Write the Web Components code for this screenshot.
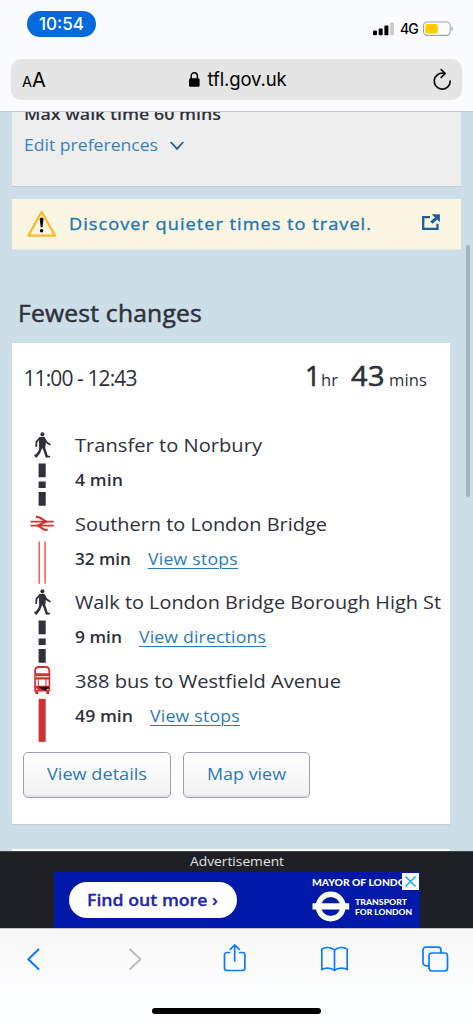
<!DOCTYPE html>
<html lang="en">
<head>
<meta charset="utf-8">
<title>Plan a journey</title>
<style>
html,body{margin:0;padding:0}
body{width:473px;height:1023px;overflow:hidden;display:flex;flex-direction:column;background:#ccdee7;font-family:"Open Sans","Noto Sans",sans-serif;color:#2e313a}
</style>
</head>
<body>
<browser-header></browser-header>
<page-view>
  <prefs-panel></prefs-panel>
  <notice-bar><fit-text w="303">Discover quieter times to travel.</fit-text></notice-bar>
  <section-title><fit-text w="184">Fewest changes</fit-text></section-title>
  <journey-card>
    <journey-leg kind="walk"><fit-text w="187">Transfer to Norbury</fit-text><fit-text slot="time" w="48">4 min</fit-text></journey-leg>
    <journey-leg kind="rail"><fit-text w="252">Southern to London Bridge</fit-text><fit-text slot="time" w="56">32 min</fit-text><fit-text slot="link" w="90">View stops</fit-text></journey-leg>
    <journey-leg kind="walk"><fit-text w="366">Walk to London Bridge Borough High St</fit-text><fit-text slot="time" w="47">9 min</fit-text><fit-text slot="link" w="127">View directions</fit-text></journey-leg>
    <journey-leg kind="bus"><fit-text w="266">388 bus to Westfield Avenue</fit-text><fit-text slot="time" w="58">49 min</fit-text><fit-text slot="link" w="90">View stops</fit-text></journey-leg>
    <plain-button slot="actions" style="width:148px"><fit-text w="100">View details</fit-text></plain-button>
    <plain-button slot="actions" style="width:127px"><fit-text w="79">Map view</fit-text></plain-button>
  </journey-card>
</page-view>
<ad-strip></ad-strip>
<browser-toolbar></browser-toolbar>

<script>
function define(name, html){
  const t=document.createElement('template');
  t.innerHTML=html;
  customElements.define(name, class extends HTMLElement{
    constructor(){super();this.attachShadow({mode:'open'}).append(t.content.cloneNode(true));}
  });
}

define('browser-header', `
<style>
:host{display:flex;flex-direction:column;height:112px;box-sizing:border-box;flex:none;background:#fafbfc;border-bottom:1px solid #c3c7ca;font-family:Inter,"Liberation Sans",sans-serif;color:#000}
.status{display:flex;justify-content:space-between;height:59px;padding:11px 19px 0 27px;box-sizing:border-box}
.time{width:69px;height:26px;border-radius:13px;background:#0469dc;color:#fff;font-size:17px;font-weight:500;line-height:26px;display:flex;justify-content:center}
.sig{display:flex;align-items:center;height:35px;gap:6px;font-size:14px;font-weight:500}
svg{display:block}
.bar{margin:0 11px;height:41px;border-radius:10px;background:#e5e5e6;display:flex;align-items:center;justify-content:space-between;padding:0 9px 0 11px}
.aa{display:flex;align-items:baseline;font-size:20px;width:60px}
.aa small{font-size:14.5px}
.url{display:flex;align-items:center;gap:8px;font-size:18.5px;line-height:43px}
.end{width:60px;display:flex;justify-content:flex-end}
</style>
<div class="status">
  <div class="time"><fit-text w="45">10:54</fit-text></div>
  <div class="sig">
    <svg width="21" height="14" viewBox="0 0 21 14"><rect x="0" y="8.6" width="4" height="4.6" rx="1"/><rect x="5.7" y="6.4" width="4" height="6.8" rx="1"/><rect x="11.4" y="3.4" width="4" height="9.8" rx="1"/><rect x="17" y="0.5" width="4" height="12.7" rx="1" fill="#ccc"/></svg>
    <fit-text w="18">4G</fit-text>
    <svg width="31" height="16" viewBox="0 0 31 16" style="margin-left:-1px"><rect x=".6" y="1" width="26.6" height="13.4" rx="3.6" fill="#fff" stroke="#a0a0a3" stroke-width="1.1"/><rect x="2.4" y="2.9" width="12.4" height="9.7" rx="1.8" fill="#fecb04"/><path d="M28.6 5.3a3 3 0 0 1 0 4.8z" fill="#999"/></svg>
  </div>
</div>
<div class="bar">
  <div class="aa"><small>A</small><span>A</span></div>
  <div class="url"><svg width="11" height="15" viewBox="0 0 11 15"><rect x="0" y="6.3" width="10.6" height="8.5" rx="1.5"/><path d="M2.2 7V4.2a3.1 3.4 0 0 1 6.2 0V7" fill="none" stroke="#000" stroke-width="1.5"/></svg><fit-text w="79">tfl.gov.uk</fit-text></div>
  <div class="end"><svg width="21" height="24" viewBox="0 0 21 24" fill="none" stroke="#111" stroke-width="1.7" stroke-linecap="round" stroke-linejoin="round"><path d="M11.7 5.3A8 8 0 1 0 18.2 13"/><path d="M9.2 1.6l4 3.9-4 3.9"/></svg></div>
</div>`);

define('page-view', `
<style>
:host{display:block;position:relative;height:739px;flex:none;overflow:hidden;background:#ccdee7}
.thumb{position:absolute;left:466px;top:133px;width:4px;height:252px;border-radius:2px;background:#a5b5bd}
.next{margin:24px 0 0 12px;width:438px;height:10px;background:#fff}
</style>
<slot></slot><div class="next"></div><div class="thumb"></div>`);

define('prefs-panel', `
<style>
:host{display:block;margin-left:12px;width:449px;height:75px;box-sizing:border-box;background:#eee;border-bottom:1px solid #c6cacd;padding-left:12px;overflow:hidden;font-size:17px}
.max{font-weight:600;line-height:20px;margin-top:-8.5px;height:20px}
.edit{display:flex;align-items:center;gap:12px;line-height:24px;margin-top:9px;color:#3a82bd}
svg{margin-top:2px}
</style>
<div class="max"><fit-text w="197">Max walk time 60 mins</fit-text></div>
<div class="edit"><fit-text w="134">Edit preferences</fit-text><svg width="14" height="10" viewBox="0 0 14 10" fill="none" stroke="#1c5f9a" stroke-width="1.8"><path d="M.8 1l6.2 6.900L13.200 1"/></svg></div>`);

define('notice-bar', `
<style>
:host{display:flex;align-items:center;margin:12px 0 0 12px;width:449px;height:50.5px;box-sizing:border-box;background:#faf5e1;border-bottom:1px solid #e3e4da;padding:0 20px 0 14px;font-size:17px;-webkit-text-stroke:.35px;color:#2275b5}
.t{margin-left:12px;flex:1}
svg{display:block}
</style>
<svg width="31" height="28" viewBox="0 0 31 28"><path d="M15.6 1.8L29 25.6H2.4z" fill="none" stroke="#fdb827" stroke-width="2.2" stroke-linejoin="round"/><path d="M13.8 9.3a1.8 1.8 0 0 1 3.7 0l-1 8h-1.8z"/><circle cx="15.6" cy="20.8" r="1.7"/></svg>
<div class="t"><slot></slot></div>
<svg width="20" height="18" viewBox="0 0 20 18" style="margin-top:-3px"><path d="M9 4.2H2.2v11.6h14.3v-5" fill="none" stroke="#1c5f9a" stroke-width="2.3"/><path d="M10.7 1.2h8.2v8l-2.7-2.6-4.7 4.2-2.2-2.2 4.6-4.2z" fill="#1c5f9a"/></svg>`);

define('section-title', `
<style>:host{display:block;margin:48px 0 0 18px;height:45.5px;line-height:30px;font-size:23px;-webkit-text-stroke:.5px}</style>
<slot></slot>`);

define('journey-card', `
<style>
:host{display:block;margin-left:12px;width:438px;height:482px;box-sizing:border-box;background:#fff;border-bottom:1px solid #c5ccd2;padding:16px 0 0 11.5px}
.head{display:flex;justify-content:space-between;align-items:baseline;height:71px;line-height:34px;padding-right:23px;font-size:21px}
.total{display:flex;align-items:baseline;font-size:15.5px}
b{font-size:27px;font-weight:400;-webkit-text-stroke:.6px}
.acts{display:flex;gap:11.500px;margin:7.500px 0 0 -.5px}
</style>
<div class="head"><fit-text w="113">11:00 - 12:43</fit-text>
<div class="total"><b style="margin-right:1px"><fit-text w="15">1</fit-text></b><fit-text w="17">hr</fit-text><b style="margin:0 4px 0 13px"><fit-text w="34">43</fit-text></b><fit-text w="38">mins</fit-text></div></div>
<slot></slot>
<div class="acts"><slot name="actions"></slot></div>`);

const WALK=`<g fill="#2e313a" stroke="#2e313a" stroke-linecap="round" stroke-linejoin="round"><circle cx="41.9" cy="433.800" r="2" stroke="none"/><path d="M39.300 437.300l4.300-.4 1.200 3.500-.7 6.400-4.600.8-.200-3.400z" stroke-width="1.500"/><g fill="none"><path d="M39 437.800l-3 3.600-.3 4.300M44.200 438.600l1.800 3.200 3.300 2.100" stroke-width="1.800"/><path d="M40.600 446.500l-2 5.400-3 3.700M42.900 446.500l1.700 4.300 1.500 4.800" stroke-width="2.500"/><path d="M46 456.100h2.900M34.500 454.700l1.500 1.500" stroke-width="1.600"/></g></g>
<path fill="#2e313a" d="M38.1 463h7.100v13.700h-7.100zM38.100 481h7.100v6.600h-7.100zM38.100 491.600h7.100v13.600h-7.100z"/>`;
const RAIL=`<g fill="none" stroke="#ce3433" stroke-width="1.900"><path d="M30 443.100h23.300M30 447.100h23.300"/><path d="M35.400 438.400l3.300.300 7 4.400-8.300 4 6.500 4 3.200.3" stroke-width="2.200"/></g>
<path fill="#f0201f" d="M38.100 463h1.100v42.300h-1.100zM44 463h1.100v42.300H44z"/>`;
const BUS=`<path d="M33.700 439.200V455h1.100v2.600h2.900V455h8v2.600h2.900V455h1.100v-20.400q0-5-4.600-5h-6.800q-4.600 0-4.600 5z" fill="#d3302f"/>
<path d="M35.500 436.700v-2.400q0-2.800 3.100-2.800h6.200q3.100 0 3.100 2.800v2.400zM35 440.800v-1h13.400v1zM35.400 443h1.900v6.300h-1.900zM38.300 443h6.600v6.300h-6.600zM46 443h2.100v6.300H46z" fill="#fff"/><path d="M37.300 450.300h10.900v3.500h-5z" fill="#161616"/><circle cx="36.100" cy="452.900" r=".9" fill="#fff"/><circle cx="47.400" cy="453.100" r=".8" fill="#fff"/>
<path fill="#ce3433" d="M38.100 462.400h7.100v43h-7.100z"/>`;
const ART={walk:WALK,rail:RAIL,bus:BUS};
customElements.define('journey-leg', class extends HTMLElement{
  constructor(){
    super();
    this.attachShadow({mode:'open'}).innerHTML=`
<style>
:host{display:grid;grid-template-columns:38px 1fr;column-gap:13.5px;height:78.7px;font-size:19px}
svg{display:block}
.name{line-height:30px;height:34.9px}
.sub{display:flex;align-items:baseline;gap:17px;line-height:30px;font-size:16.500px;font-weight:600}
slot[name=link]{font-weight:400;color:#2a7ab8}
</style>
<svg width="38" height="78.7" viewBox="23.5 428.5 38 78.7" style="overflow:visible;margin-top:-1.500px">${ART[this.getAttribute('kind')]}</svg>
<div><div class="name"><slot></slot></div><div class="sub"><slot name="time"></slot><slot name="link"></slot></div></div>`;
  }
});

define('plain-button', `
<style>:host{display:flex;justify-content:center;box-sizing:border-box;height:46px;border:1.500px solid #9aa1ae;border-radius:5px;background:linear-gradient(#fff,#f1f1f2);box-shadow:inset 0 -2px 0 #e4e4e6;line-height:42px;font-size:17px;color:#2a7ab8}</style>
<slot></slot>`);

define('ad-strip', `
<style>
:host{display:flex;flex-direction:column;align-items:center;height:77px;flex:none;background:#1f2026;box-shadow:inset 0 1px #42464c;color:#e3e3e5}
.label{height:21px;line-height:21px;font-size:13px}
.banner{position:relative;display:flex;align-items:center;width:366px;height:56px;box-sizing:border-box;background:#0019a8;padding-left:15px}
.cta{width:168px;height:36.500px;border-radius:19px;background:#fff;color:#1f26ab;font-size:17px;font-weight:600;display:flex;justify-content:center;line-height:35px;-webkit-text-stroke:.3px}
.brand{margin-left:75px;color:#fff;font-family:Lato,sans-serif;font-weight:900;height:56px}
.mayor{font-size:10px;line-height:13px;padding-top:4px;height:14px}
.row{display:flex;gap:5px;font-size:8.200px;line-height:10px}
.tfl{display:flex;flex-direction:column;padding-top:7px}
.close{position:absolute;right:1px;top:1px;width:17px;height:17px;background:#fff}
svg{display:block}
</style>
<div class="label"><fit-text w="94">Advertisement</fit-text></div>
<div class="banner">
  <div class="cta"><fit-text w="131">Find out more ›</fit-text></div>
  <div class="brand">
    <div class="mayor"><fit-text w="102">MAYOR OF LONDON</fit-text></div>
    <div class="row"><svg width="38" height="34" viewBox="0 0 38 34"><circle cx="18.700" cy="16.500" r="12.300" fill="none" stroke="#fff" stroke-width="5.400"/><path d="M.5 13.300h36.700v6.300H.5z" fill="#fff"/></svg>
    <div class="tfl"><fit-text w="52">TRANSPORT</fit-text><fit-text w="57">FOR LONDON</fit-text></div></div>
  </div>
  <div class="close"><svg width="17" height="17" viewBox="0 0 17 17" stroke="#10afd0" stroke-width="1.500"><path d="M3.500 3.500l10 10M13.500 3.500l-10 10"/></svg></div>
</div>`);

define('browser-toolbar', `
<style>
:host{display:flex;flex-direction:column;align-items:center;height:95px;box-sizing:border-box;flex:none;background:linear-gradient(#f8f7f8,#fcfdfe 60%);border-top:1px solid #c3c3c6}
nav{display:flex;justify-content:space-between;align-items:center;align-self:stretch;height:60px;padding:0 24px 0 20px;margin-bottom:19px}
.home{width:169px;height:6px;border-radius:3px;background:#000}
svg{display:block;fill:none;stroke:#0a7bff;stroke-width:1.700;stroke-linecap:round;stroke-linejoin:round}
</style>
<nav>
<svg width="28" height="30" viewBox="0 0 28 30"><path d="M18.500 5.500L8.300 15.300l10.200 9.700" stroke-width="2"/></svg>
<svg width="28" height="30" viewBox="0 0 28 30"><path d="M10 5.500l10.500 9.800L10 25" style="stroke:#bdbdc0" stroke-width="2"/></svg>
<svg width="28" height="32" viewBox="0 0 28 32"><path d="M9.500 9.500H7a2.500 2.500 0 0 0-2.500 2.500v13A2.500 2.500 0 0 0 7 27.500h15.400a2.500 2.500 0 0 0 2.500-2.500V12a2.500 2.500 0 0 0-2.500-2.500h-2.700M14.700 18V2.500M10.200 6.300l4.500-4.500 4.500 4.500"/></svg>
<svg width="30" height="30" viewBox="0 0 30 30"><path d="M15.500 6.200c-3.500-3.400-9.700-3.400-12.700-1v20.500c3-2.300 9.200-2.300 12.700.6 3.500-2.900 9.700-2.900 12.700-.6V5.200c-3-2.400-9.200-2.400-12.700 1v20"/></svg>
<svg width="28" height="30" viewBox="0 0 28 30"><rect x="8" y="9" width="18.500" height="18" rx="3"/><path d="M7.500 21.800H5a3 3 0 0 1-3-3V6.200a3 3 0 0 1 3-3h12a3 3 0 0 1 3 3v2.500"/></svg>
</nav>
<div class="home"></div>`);

/* Widens the glyphs a little, then tracks the line so that it fills the given measure. */
customElements.define('fit-text', class extends HTMLElement{
  constructor(){
    super();
    this.attachShadow({mode:'open'}).innerHTML='<style>:host{display:inline-block;white-space:nowrap}span{display:inline-block;transform-origin:0 50%}</style><span><slot></slot></span>';
  }
  connectedCallback(){
    const w=+this.getAttribute('w'), n=this.textContent.length;
    const span=this.shadowRoot.querySelector('span');
    const nat=span.getBoundingClientRect().width;
    const k=Math.min(1.07,Math.max(1,w/nat));
    this.style.width=w+'px';
    if(n>1) span.style.letterSpacing=((w/k-nat)/n).toFixed(3)+'px';
    if(k>1&&n>1) span.style.transform='scaleX('+k.toFixed(4)+')';
    if(this.slot==='link') span.style.cssText+='text-decoration:underline;text-decoration-thickness:1px;text-underline-offset:2.5px';
  }
});
</script>
</body>
</html>
